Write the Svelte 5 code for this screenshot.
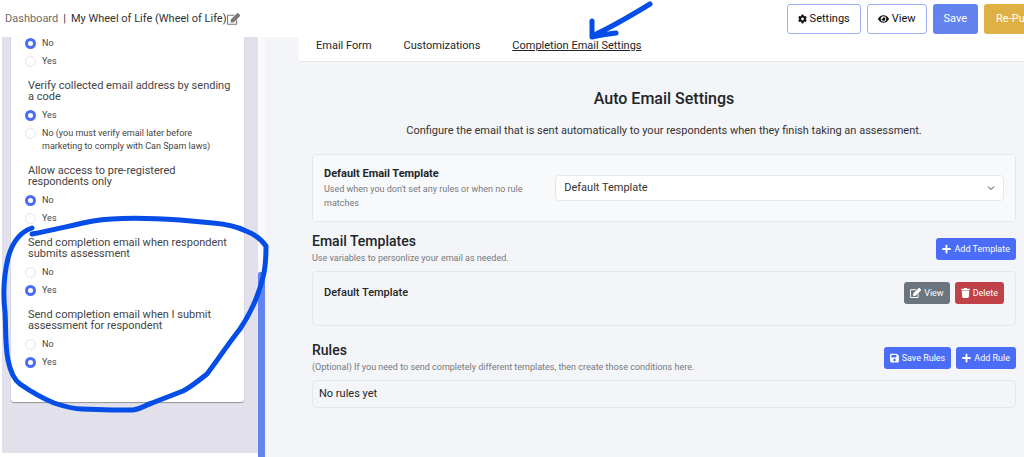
<script>
  let questions = $state([
    {
      id: 'collect',
      title: '',
      options: ['No', 'Yes'],
      value: 'No'
    },
    {
      id: 'verify',
      title: 'Verify collected email address by sending a code',
      options: [
        'Yes',
        'No (you must verify email later before marketing to comply with Can Spam laws)'
      ],
      value: 'Yes'
    },
    {
      id: 'preregistered',
      title: 'Allow access to pre-registered respondents only',
      options: ['No', 'Yes'],
      value: 'No'
    },
    {
      id: 'respondent-submit',
      title: 'Send completion email when respondent submits assessment',
      options: ['No', 'Yes'],
      value: 'Yes'
    },
    {
      id: 'owner-submit',
      title: 'Send completion email when I submit assessment for respondent',
      options: ['No', 'Yes'],
      value: 'Yes'
    }
  ]);

  const tabs = ['Email Form', 'Customizations', 'Completion Email Settings'];
  let activeTab = $state('Completion Email Settings');
  let template = $state('Default Template');
</script>

{#snippet editIcon()}
  <svg class="icon wide" viewBox="0 0 576 512">
    <path
      d="M402 320l32-32c5-5 14-1 14 6v170c0 26-22 48-48 48H48c-26 0-48-22-48-48V112c0-26 22-48 48-48h274c7 0 11 9 6 14l-32 32c-2 1-4 2-6 2H48v352h352V326c0-2 1-4 2-6zM559 143L296 406l-90 10c-26 3-48-19-46-46l10-90L433 17c23-23 60-23 83 0l43 43c23 23 23 60 0 83z"
    />
  </svg>
{/snippet}

{#snippet plusIcon()}
  <svg class="icon" viewBox="0 0 448 512">
    <path
      d="M416 208H272V64c0-18-14-32-32-32h-32c-18 0-32 14-32 32v144H32c-18 0-32 14-32 32v32c0 18 14 32 32 32h144v144c0 18 14 32 32 32h32c18 0 32-14 32-32V304h144c18 0 32-14 32-32v-32c0-18-14-32-32-32z"
    />
  </svg>
{/snippet}

<div class="page">
  <header class="topbar">
    <nav class="crumbs">
      <a href="#dashboard">Dashboard</a>
      <span class="divider">|</span>
      <span class="current">My Wheel of Life (Wheel of Life)</span>
      <button class="rename" aria-label="Rename">{@render editIcon()}</button>
    </nav>
    <div class="top-actions">
      <button class="btn outline">
        <svg class="icon" viewBox="0 0 512 512">
          <path
            fill-rule="evenodd"
            d="M487 316l-42-25a193 193 0 0 0 0-70l42-25c5-3 7-9 6-14a249 249 0 0 0-55-95c-4-4-10-5-15-2l-43 24a190 190 0 0 0-61-35V25c0-6-4-10-9-12a251 251 0 0 0-110 0c-5 2-9 6-9 12v49a195 195 0 0 0-61 35L88 85c-5-3-11-2-15 2a248 248 0 0 0-55 95c-2 5 0 11 5 14l43 25a193 193 0 0 0 0 70l-43 25c-5 3-7 9-5 14a249 249 0 0 0 55 95c4 4 10 5 15 2l42-24a190 190 0 0 0 61 35v49c0 6 4 10 9 12a251 251 0 0 0 110 0c6-2 9-6 9-12v-49a195 195 0 0 0 61-35l43 24c5 3 11 2 15-2a248 248 0 0 0 55-95c1-5-1-11-6-14zM256 336a80 80 0 1 1 0-160 80 80 0 0 1 0 160z"
          />
        </svg>
        Settings
      </button>
      <button class="btn outline">
        <svg class="icon wide" viewBox="0 0 576 512">
          <path
            fill-rule="evenodd"
            d="M572 241C518 136 411 64 288 64S58 136 4 241a32 32 0 0 0 0 30c54 105 161 177 284 177s230-72 284-177a32 32 0 0 0 0-30zM288 400a144 144 0 1 1 0-288 144 144 0 0 1 0 288zm0-240a95 95 0 0 0-25 4 48 48 0 0 1-67 67 96 96 0 1 0 92-71z"
          />
        </svg>
        View
      </button>
      <button class="btn save">Save</button>
      <button class="btn publish">Re-Publish</button>
    </div>
  </header>

  <div class="body">
    <aside class="sidebar">
      <div class="card">
        {#each questions as question (question.id)}
          <fieldset>
            {#if question.title}
              <legend>{question.title}</legend>
            {/if}
            <div class="options">
              {#each question.options as option}
                <label>
                  <input
                    type="radio"
                    name={question.id}
                    value={option}
                    bind:group={question.value}
                  />
                  <span>{option}</span>
                </label>
              {/each}
            </div>
          </fieldset>
        {/each}
      </div>
    </aside>
    <div class="rail"><div class="thumb"></div></div>

    <main>
      <nav class="tabs">
        {#each tabs as tab}
          <button class="tab" class:active={tab === activeTab} onclick={() => (activeTab = tab)}>
            {tab}
          </button>
        {/each}
      </nav>

      <div class="content">
        <h1>Auto Email Settings</h1>
        <p class="intro">
          Configure the email that is sent automatically to your respondents when they finish taking
          an assessment.
        </p>

        <section class="panel default-panel">
          <div class="default-text">
            <label for="template">Default Email Template</label>
            <p>Used when you don't set any rules or when no rule matches</p>
          </div>
          <div class="select">
            <select id="template" bind:value={template}>
              <option>Default Template</option>
            </select>
            <svg class="chevron" viewBox="0 0 16 16">
              <path d="M2 5l6 6 6-6" />
            </svg>
          </div>
        </section>

        <section>
          <div class="section-head">
            <div>
              <h2>Email Templates</h2>
              <p>Use variables to personlize your email as needed.</p>
            </div>
            <button class="btn small primary">{@render plusIcon()}Add Template</button>
          </div>
          <div class="panel template-row">
            <h3>Default Template</h3>
            <div class="row-actions">
              <button class="btn small secondary">{@render editIcon()}View</button>
              <button class="btn small danger">
                <svg class="icon" viewBox="0 0 448 512">
                  <path
                    d="M432 32H312l-9-19a24 24 0 0 0-22-13H167a24 24 0 0 0-22 13l-9 19H16C7 32 0 39 0 48v32c0 9 7 16 16 16h416c9 0 16-7 16-16V48c0-9-7-16-16-16zM32 128l21 339c2 25 23 45 48 45h246c25 0 46-20 48-45l21-339z"
                  />
                </svg>Delete
              </button>
            </div>
          </div>
        </section>

        <section>
          <div class="section-head">
            <div>
              <h2>Rules</h2>
              <p>
                (Optional) If you need to send completely different templates, then create those
                conditions here.
              </p>
            </div>
            <div class="row-actions">
              <button class="btn small primary">
                <svg class="icon" viewBox="0 0 448 512">
                  <path
                    fill-rule="evenodd"
                    d="M434 130l-84-84a48 48 0 0 0-34-14H48C22 32 0 54 0 80v352c0 26 22 48 48 48h352c26 0 48-22 48-48V164c0-13-5-25-14-34zM224 416a64 64 0 1 1 0-128 64 64 0 0 1 0 128zm96-305v101c0 7-5 12-12 12H76c-7 0-12-5-12-12V108c0-7 5-12 12-12h229z"
                  />
                </svg>Save Rules
              </button>
              <button class="btn small primary">{@render plusIcon()}Add Rule</button>
            </div>
          </div>
          <div class="panel empty">No rules yet</div>
        </section>
      </div>
    </main>
  </div>

  <svg class="marker" width="700" height="440" viewBox="0 0 700 440">
    <path
      d="M32 228C20 232 12 243 8 258C4 275 3 296 5 312C6 328 5 345 8 360C10 370 13 379 20 384C30 391 42 398 54 403C63 406 72 409 82 409L112 410L133 410C141 409 145 405 152 403L183 391C191 387 198 381 207 374C217 361 228 344 240 329C252 311 259 294 263 277C266 266 266 256 266 246C261 239 254 234 246 231C236 226 225 224 213 223L180 220C150 218 118 217 93 221C73 225 53 230 32 234"
    />
    <path d="M650 4C632 15 612 27 592 36M592 21V37C600 35 608 34 616 33" />
  </svg>
</div>

<style>
  :global(body) {
    margin: 0;
    background: #fff;
    font-family: Roboto, 'Liberation Sans', sans-serif;
    color: #212529;
  }

  .page {
    position: relative;
    display: flex;
    flex-direction: column;
    min-height: 100vh;
    overflow: hidden;
    font-size: 11px;
    line-height: 16px;
  }

  button {
    font: inherit;
    cursor: pointer;
  }

  h1,
  h2,
  h3,
  p {
    margin: 0;
  }

  .icon {
    width: 9px;
    height: 10px;
    flex: none;
    fill: currentColor;
  }

  .icon.wide {
    width: 11px;
  }

  .topbar {
    display: flex;
    align-items: center;
    justify-content: space-between;
    height: 37px;
    padding-left: 5px;
  }

  .crumbs {
    display: flex;
    align-items: center;
    gap: 5px;
    color: #333;
  }

  .crumbs a {
    color: #6c6c6c;
    text-decoration: none;
  }

  .rename {
    display: flex;
    margin-left: -5px;
    padding: 0;
    border: 0;
    background: none;
    color: #777;
  }

  .rename .icon {
    width: 13px;
    height: 12px;
  }

  .top-actions {
    display: flex;
    gap: 6px;
    margin-right: -36px;
  }

  .btn {
    display: flex;
    align-items: center;
    gap: 3px;
    height: 30px;
    padding: 0 11px;
    border: 1px solid transparent;
    border-radius: 3px;
    color: #fff;
    white-space: nowrap;
  }

  .btn.outline {
    padding: 0 10px;
    border-color: #9db1f7;
    background: #fff;
    color: #111;
  }

  .btn.save {
    padding: 0 10px;
    background: #6384ee;
  }

  .btn.publish {
    background: #dfb145;
  }

  .btn.small {
    height: 22px;
    padding: 0 5px;
    font-size: 9px;
  }

  .btn.primary {
    background: #4a6cf7;
  }

  .btn.secondary {
    background: #6c757d;
  }

  .btn.danger {
    background: #c14148;
  }

  .body {
    display: flex;
    flex: 1;
  }

  .sidebar {
    width: 256px;
    flex: none;
    box-sizing: border-box;
    margin: 0 0 4px 2px;
    padding: 0 14px 0 9px;
    background: #e2e0eb;
  }

  .card {
    padding: 0 8px 21px 14px;
    border-radius: 0 0 3px 3px;
    background: #fff;
    box-shadow: 0 1px 1px rgba(0, 0, 0, 0.35);
  }

  fieldset {
    min-width: 0;
    margin: 0 0 12px;
    padding: 0;
    border: 0;
  }

  legend {
    padding: 0 0 7px 3px;
    color: #444;
    line-height: 11px;
  }

  .options {
    display: flex;
    flex-direction: column;
    gap: 5px;
    padding-right: 12px;
  }

  .options label {
    display: flex;
    align-items: flex-start;
    gap: 6px;
    color: #444;
    font-size: 9px;
    line-height: 13px;
  }

  input[type='radio'] {
    width: 11px;
    height: 11px;
    flex: none;
    box-sizing: border-box;
    margin: 1px 0 0;
    appearance: none;
    border: 1px solid #e4e4e4;
    border-radius: 50%;
    background: #fff;
  }

  input[type='radio']:checked {
    border: 3px solid #4a6cf7;
  }

  .rail {
    display: flex;
    width: 7px;
    flex: none;
    flex-direction: column;
    justify-content: flex-end;
    background: #fafafa;
  }

  .thumb {
    height: 44%;
    border-radius: 2px 2px 0 0;
    background: #6384ee;
  }

  main {
    flex: 1;
    min-width: 0;
    padding-left: 34px;
    background: #f4f5f8;
  }

  .tabs {
    display: flex;
    height: 24px;
    padding-left: 1px;
    border-bottom: 1px solid #e6e7ec;
    background: #fff;
  }

  .tab {
    padding: 0 16px 7px;
    border: 0;
    background: none;
    color: #212529;
    white-space: nowrap;
  }

  .tab.active {
    text-decoration: underline;
  }

  .content {
    padding: 26px 8px 0 13px;
  }

  h1 {
    font-size: 16px;
    font-weight: 500;
    line-height: 22px;
    text-align: center;
  }

  .intro {
    margin: 13px 0 15px;
    color: #333;
    text-align: center;
  }

  .panel {
    display: flex;
    box-sizing: border-box;
    border: 1px solid #e6e7ea;
    border-radius: 4px;
  }

  .default-panel {
    align-items: center;
    gap: 12px;
    padding: 11px;
    background: #f8f9fb;
  }

  .default-text {
    flex: 1;
  }

  .default-text label {
    display: block;
    font-weight: 700;
  }

  .default-text p {
    color: #75797d;
    font-size: 9px;
    line-height: 14px;
  }

  .select {
    position: relative;
    flex: 0 0 66%;
  }

  select {
    width: 100%;
    height: 26px;
    padding: 0 8px;
    appearance: none;
    border: 1px solid #e6e7ea;
    border-radius: 4px;
    background: #fff;
    color: #333;
    font: inherit;
  }

  .chevron {
    position: absolute;
    top: 9px;
    right: 9px;
    width: 8px;
    height: 8px;
    fill: none;
    stroke: #343a40;
    stroke-width: 2;
    pointer-events: none;
  }

  .section-head {
    display: flex;
    align-items: center;
    justify-content: space-between;
    margin: 10px 0 5px;
  }

  .section-head h2 {
    font-size: 14px;
    font-weight: 500;
    line-height: 18px;
  }

  .section-head p {
    color: #75797d;
    font-size: 9px;
    line-height: 16px;
  }

  .template-row {
    align-items: flex-start;
    justify-content: space-between;
    margin-bottom: 15px;
    padding: 10px 11px 21px;
  }

  .template-row h3 {
    font-size: 11px;
    font-weight: 500;
    line-height: 22px;
  }

  .row-actions {
    display: flex;
    gap: 5px;
  }

  .empty {
    padding: 5px 6px;
  }

  .marker {
    position: absolute;
    top: 0;
    left: 0;
    fill: none;
    stroke: #044de6;
    stroke-width: 5;
    stroke-linecap: round;
    stroke-linejoin: round;
    pointer-events: none;
  }
</style>
